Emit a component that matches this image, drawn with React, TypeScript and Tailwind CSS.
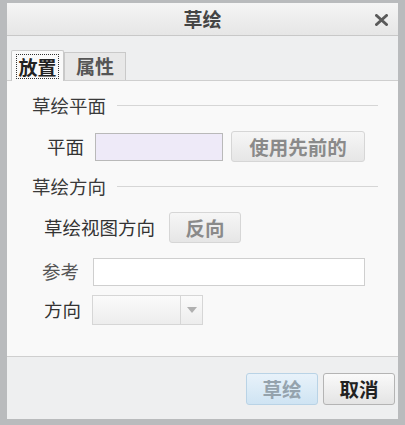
import React from 'react';

const font = { fontFamily: '"Noto Sans CJK SC", "Noto Sans", sans-serif' };

const SectionTitle: React.FC<{ label: string }> = ({ label }) => (
    <div className="flex items-center gap-[11px] pl-[25px] pr-[20px]">
        <span className="text-[18.5px] leading-[22px] text-[#3a3a3a]">{label}</span>
        <div className="flex-1 h-px bg-[#d6d6d6]" />
    </div>
);

const App: React.FC = () => {
    return (
        <div className="w-[405px] h-[425px] bg-[#f2f2f2]" style={font}>
            <div className="w-full h-full flex flex-col bg-[#eeeff0] border-l-[7px] border-r-[7px] border-t-[3px] border-b-[6px] border-[#b9bbbd]">
                {/* Title bar */}
                <div className="relative h-[33px] flex items-center justify-center bg-gradient-to-b from-[#f5f5f5] to-[#e6e6e6] border-b border-[#c8c8c8]">
                    <span className="text-[19px] font-bold text-[#454545]">草绘</span>
                    <svg className="absolute right-[10px] top-[11px]" width="13" height="12" viewBox="0 0 13 12">
                        <path d="M1.5 1.5 L11.5 10.5 M11.5 1.5 L1.5 10.5" stroke="#5a5a5a" strokeWidth="3" strokeLinecap="round" />
                    </svg>
                </div>

                {/* Tabs */}
                <div className="flex items-end pl-[4px] pt-[12px] h-[44px]">
                    <div className="h-[31px] w-[53px] flex items-center justify-center bg-[#f9f9f9] border border-b-0 border-[#c9c9c9] rounded-t-[2px] relative z-10 -mb-px">
                        <span className="px-[1px] text-[19px] font-bold leading-[23px] text-[#222] outline-1 outline-dotted outline-[#333]">放置</span>
                    </div>
                    <div className="h-[28px] w-[62px] flex items-center justify-center bg-[#e8e8e8] border border-b-0 border-[#c9c9c9]">
                        <span className="text-[19px] font-bold text-[#555]">属性</span>
                    </div>
                </div>

                {/* Content panel */}
                <div className="flex-1 bg-[#f9f9f9] border-y border-[#cfcfcf] flex flex-col pt-[13px]">
                    <SectionTitle label="草绘平面" />
                    <div className="flex items-center mt-[15px] pl-[40px]">
                        <span className="text-[18.5px] text-[#333] w-[48px]">平面</span>
                        <div className="w-[128px] h-[28px] bg-[#eeeaf8] border border-[#b9b9b9]" />
                        <button className="ml-[8px] w-[134px] h-[31px] rounded-[3px] border border-[#d6d6d6] bg-gradient-to-b from-[#f6f6f6] to-[#e6e6e6] text-[19.5px] font-bold text-[#8a8a8a]">
                            使用先前的
                        </button>
                    </div>

                    <div className="mt-[13px]">
                        <SectionTitle label="草绘方向" />
                    </div>
                    <div className="flex items-center mt-[15px] pl-[37px]">
                        <span className="text-[18.5px] text-[#333]">草绘视图方向</span>
                        <button className="ml-[14px] w-[72px] h-[31px] rounded-[3px] border border-[#d6d6d6] bg-gradient-to-b from-[#f6f6f6] to-[#e6e6e6] text-[19.5px] font-bold text-[#8a8a8a]">
                            反向
                        </button>
                    </div>

                    <div className="flex items-center mt-[15px] pl-[35px]">
                        <span className="text-[18.5px] text-[#555] w-[51px]">参考</span>
                        <div className="w-[272px] h-[28px] bg-white border border-[#cfcfcf]" />
                    </div>

                    <div className="flex items-center mt-[9px] pl-[37px]">
                        <span className="text-[18.5px] text-[#333] w-[48px]">方向</span>
                        <div className="w-[111px] h-[30px] flex bg-gradient-to-b from-[#fbfbfb] to-[#ededed] border border-[#d6d6d6]">
                            <div className="flex-1" />
                            <div className="w-[22px] border-l border-[#d6d6d6] flex items-center justify-center">
                                <svg width="10" height="6" viewBox="0 0 10 6">
                                    <path d="M0 0 L10 0 L5 6 Z" fill="#b0b0b0" />
                                </svg>
                            </div>
                        </div>
                    </div>
                </div>

                {/* Footer */}
                <div className="h-[62px] flex items-center justify-end gap-[5px] pr-[3px] pt-[2px]">
                    <button className="w-[72px] h-[32px] rounded-[3px] border border-[#b9d3e6] bg-gradient-to-b from-[#e8f2fa] to-[#cfe4f3] text-[19.5px] font-bold text-[#95a3ad]">
                        草绘
                    </button>
                    <button className="w-[72px] h-[32px] rounded-[3px] border border-[#b4b4b4] bg-gradient-to-b from-[#fafafa] to-[#e4e4e4] text-[19.5px] font-bold text-[#222]">
                        取消
                    </button>
                </div>
            </div>
        </div>
    );
};

export default App;
